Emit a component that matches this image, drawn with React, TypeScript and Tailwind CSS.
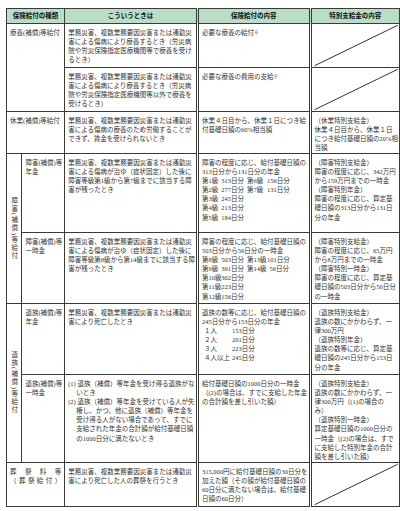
import React from "react";

// 労災保険給付の一覧表
const td = "border border-[#3a3a3a] align-top pl-[3px] pr-[1px] pt-[4px]";
const dbl = "border-l-[3px] [border-left-style:double]";

function L({ lines, className = "" }: { lines: string[]; className?: string }) {
    return (
        <div className={className}>
            {lines.map((l, i) => (
                <div key={i} className="whitespace-nowrap">
                    {l}
                </div>
            ))}
        </div>
    );
}

function Diag() {
    return (
        <svg
            className="absolute inset-0 h-full w-full"
            viewBox="0 0 100 100"
            preserveAspectRatio="none"
        >
            <line
                x1="3"
                y1="97"
                x2="98"
                y2="3"
                stroke="#333"
                strokeWidth="1"
                vectorEffect="non-scaling-stroke"
            />
        </svg>
    );
}

function Grades({ rows }: { rows: string[][] }) {
    return (
        <div>
            {rows.map((r, i) => (
                <div key={i} className="flex whitespace-nowrap">
                    <span className="w-[19px]">{r[0]}</span>
                    <span className="w-[23px] text-right">{r[1]}</span>
                    {r[2] && <span className="ml-[3px] w-[20px]">{r[2]}</span>}
                    {r[3] && <span className="w-[22px] text-right">{r[3]}</span>}
                </div>
            ))}
        </div>
    );
}

function People({ rows }: { rows: string[][] }) {
    return (
        <div className="pl-[2px]">
            {rows.map((r, i) => (
                <div key={i} className="flex whitespace-nowrap">
                    <span className="w-[28px]">{r[0]}</span>
                    <span className="w-[22px] text-right">{r[1]}</span>
                </div>
            ))}
        </div>
    );
}

function Vertical({ text }: { text: string }) {
    return (
        <div className="flex justify-center">
            <span className="[writing-mode:vertical-rl] tracking-[1.5px]">{text}</span>
        </div>
    );
}

function Spread({ chars }: { chars: string[] }) {
    return (
        <div className="flex justify-between">
            {chars.map((c, i) => (
                <span key={i}>{c}</span>
            ))}
        </div>
    );
}

const head1 = ["業務災害、複数業務要因災害または通勤災"];

export default function App() {
    return (
        <div className="min-h-[511px] w-[400px] bg-white pl-[6px] pt-[8px] font-['Liberation_Serif','Noto_Sans_CJK_JP',serif] text-[6.5px] leading-[9.1px] text-[#333]">
            <table className="table-fixed border-collapse border border-[#333]">
                <colgroup>
                    <col className="w-[17px]" />
                    <col className="w-[43px]" />
                    <col className="w-[132px]" />
                    <col className="w-[108px]" />
                    <col className="w-[87px]" />
                </colgroup>
                <thead>
                    <tr className="h-[15px] bg-[#b9ddc6] font-['Noto_Sans_CJK_JP',sans-serif] font-bold text-[#111]">
                        <th colSpan={2} className="border border-[#3a3a3a] align-middle">
                            保険給付の種類
                        </th>
                        <th className="border border-[#3a3a3a] align-middle">こういうときは</th>
                        <th className={`border border-[#3a3a3a] align-middle ${dbl}`}>保険給付の内容</th>
                        <th className={`border border-[#3a3a3a] align-middle ${dbl}`}>特別支給金の内容</th>
                    </tr>
                </thead>
                <tbody>
                    <tr className="h-[44px]">
                        <td rowSpan={2} colSpan={2} className={td}>
                            療養(補償)等給付
                        </td>
                        <td className={td}>
                            <L
                                lines={[
                                    ...head1,
                                    "害による傷病により療養するとき（労災病",
                                    "院や労災保険指定医療機関等で療養を受け",
                                    "るとき）",
                                ]}
                            />
                        </td>
                        <td className={`${td} ${dbl}`}>
                            必要な療養の給付<span className="align-top text-[4.5px]">※</span>
                        </td>
                        <td className={`${td} ${dbl} relative`}>
                            <Diag />
                        </td>
                    </tr>
                    <tr className="h-[44px]">
                        <td className={td}>
                            <L
                                lines={[
                                    ...head1,
                                    "害による傷病により療養するとき（労災病",
                                    "院や労災保険指定医療機関等以外で療養を",
                                    "受けるとき）",
                                ]}
                            />
                        </td>
                        <td className={`${td} ${dbl}`}>
                            必要な療養の費用の支給<span className="align-top text-[4.5px]">※</span>
                        </td>
                        <td className={`${td} ${dbl} relative`}>
                            <Diag />
                        </td>
                    </tr>
                    <tr className="h-[42px]">
                        <td colSpan={2} className={td}>
                            休業(補償)等給付
                        </td>
                        <td className={td}>
                            <L
                                lines={[
                                    ...head1,
                                    "害による傷病の療養のため労働することが",
                                    "できず、賃金を受けられないとき",
                                ]}
                            />
                        </td>
                        <td className={`${td} ${dbl}`}>
                            <L lines={["休業４日目から、休業１日につき給", "付基礎日額の60%相当額"]} />
                        </td>
                        <td className={`${td} ${dbl}`}>
                            <L
                                lines={[
                                    "（休業特別支給金）",
                                    "休業４日目から、休業１日",
                                    "につき給付基礎日額の20%相",
                                    "当額",
                                ]}
                            />
                        </td>
                    </tr>
                    <tr className="h-[79px]">
                        <td rowSpan={2} className="border border-[#3a3a3a] align-middle">
                            <Vertical text="障害(補償)等給付" />
                        </td>
                        <td className={td}>
                            <L lines={["障害(補償)等", "年金"]} />
                        </td>
                        <td className={td}>
                            <L
                                lines={[
                                    ...head1,
                                    "害による傷病が治ゆ（症状固定）した後に",
                                    "障害等級第1級から第7級までに該当する障",
                                    "害が残ったとき",
                                ]}
                            />
                        </td>
                        <td className={`${td} ${dbl}`}>
                            <L lines={["障害の程度に応じ、給付基礎日額の", "313日分から131日分の年金"]} />
                            <Grades
                                rows={[
                                    ["第1級", "313日分", "第6級", "156日分"],
                                    ["第2級", "277日分", "第7級", "131日分"],
                                    ["第3級", "245日分"],
                                    ["第4級", "213日分"],
                                    ["第5級", "184日分"],
                                ]}
                            />
                        </td>
                        <td className={`${td} ${dbl}`}>
                            <L
                                lines={[
                                    "（障害特別支給金）",
                                    "障害の程度に応じ、342万円",
                                    "から159万円までの一時金",
                                    "（障害特別年金）",
                                    "障害の程度に応じ、算定基",
                                    "礎日額の313日分から131日",
                                    "分の年金",
                                ]}
                            />
                        </td>
                    </tr>
                    <tr className="h-[71px]">
                        <td className={td}>
                            <L lines={["障害(補償)等", "一時金"]} />
                        </td>
                        <td className={td}>
                            <L
                                lines={[
                                    ...head1,
                                    "害による傷病が治ゆ（症状固定）した後に",
                                    "障害等級第8級から第14級までに該当する障",
                                    "害が残ったとき",
                                ]}
                            />
                        </td>
                        <td className={`${td} ${dbl}`}>
                            <L lines={["障害の程度に応じ、給付基礎日額の", "503日分から56日分の一時金"]} />
                            <Grades
                                rows={[
                                    ["第8級", "503日分", "第13級", "101日分"],
                                    ["第9級", "391日分", "第14級", "56日分"],
                                    ["第10級", "302日分"],
                                    ["第11級", "223日分"],
                                    ["第12級", "156日分"],
                                ]}
                            />
                        </td>
                        <td className={`${td} ${dbl}`}>
                            <L
                                lines={[
                                    "（障害特別支給金）",
                                    "障害の程度に応じ、65万円",
                                    "から8万円までの一時金",
                                    "（障害特別一時金）",
                                    "障害の程度に応じ、算定基",
                                    "礎日額の503日分から56日分",
                                    "の一時金",
                                ]}
                            />
                        </td>
                    </tr>
                    <tr className="h-[71px]">
                        <td rowSpan={2} className="border border-[#3a3a3a] align-middle">
                            <Vertical text="遺族(補償)等給付" />
                        </td>
                        <td className={td}>
                            <L lines={["遺族(補償)等", "年金"]} />
                        </td>
                        <td className={td}>
                            <L lines={[...head1, "害により死亡したとき"]} />
                        </td>
                        <td className={`${td} ${dbl}`}>
                            <L lines={["遺族の数等に応じ、給付基礎日額の", "245日分から153日分の年金"]} />
                            <People
                                rows={[
                                    ["１人", "153日分"],
                                    ["２人", "201日分"],
                                    ["３人", "223日分"],
                                    ["４人以上", "245日分"],
                                ]}
                            />
                        </td>
                        <td className={`${td} ${dbl}`}>
                            <L
                                lines={[
                                    "（遺族特別支給金）",
                                    "遺族の数にかかわらず、一",
                                    "律300万円",
                                    "（遺族特別年金）",
                                    "遺族の数等に応じ、算定基",
                                    "礎日額の245日分から153日",
                                    "分の年金",
                                ]}
                            />
                        </td>
                    </tr>
                    <tr className="h-[88px]">
                        <td className={td}>
                            <L lines={["遺族(補償)等", "一時金"]} />
                        </td>
                        <td className={td}>
                            <div className="whitespace-nowrap">(1) 遺族（補償）等年金を受け得る遺族がな</div>
                            <div className="whitespace-nowrap pl-[8px]">いとき</div>
                            <div className="whitespace-nowrap">(2) 遺族（補償）等年金を受けている人が失</div>
                            <L
                                className="pl-[8px]"
                                lines={[
                                    "権し、かつ、他に遺族（補償）等年金を",
                                    "受け得る人がない場合であって、すでに",
                                    "支給された年金の合計額が給付基礎日額",
                                    "の1000日分に満たないとき",
                                ]}
                            />
                        </td>
                        <td className={`${td} ${dbl}`}>
                            <L
                                lines={[
                                    "給付基礎日額の1000日分の一時金",
                                    "（(2)の場合は、すでに支給した年金",
                                    "の合計額を差し引いた額）",
                                ]}
                            />
                        </td>
                        <td className={`${td} ${dbl}`}>
                            <L
                                lines={[
                                    "（遺族特別支給金）",
                                    "遺族の数にかかわらず、一",
                                    "律300万円（(1)の場合の",
                                    "み）",
                                    "（遺族特別一時金）",
                                    "算定基礎日額の1000日分の",
                                    "一時金（(2)の場合は、すで",
                                    "に支給した特別年金の合計",
                                    "額を差し引いた額）",
                                ]}
                            />
                        </td>
                    </tr>
                    <tr className="h-[44px]">
                        <td colSpan={2} className={`${td} pr-[3px]`}>
                            <Spread chars={["葬", "祭", "料", "等"]} />
                            <Spread chars={["（", "葬", "祭", "給", "付", "）"]} />
                        </td>
                        <td className={td}>
                            <L lines={[...head1, "害により死亡した人の葬祭を行うとき"]} />
                        </td>
                        <td className={`${td} ${dbl}`}>
                            <L
                                lines={[
                                    "315,000円に給付基礎日額の30日分を",
                                    "加えた額（その額が給付基礎日額の",
                                    "60日分に満たない場合は、給付基礎",
                                    "日額の60日分）",
                                ]}
                            />
                        </td>
                        <td className={`${td} ${dbl} relative`}>
                            <Diag />
                        </td>
                    </tr>
                </tbody>
            </table>
        </div>
    );
}
